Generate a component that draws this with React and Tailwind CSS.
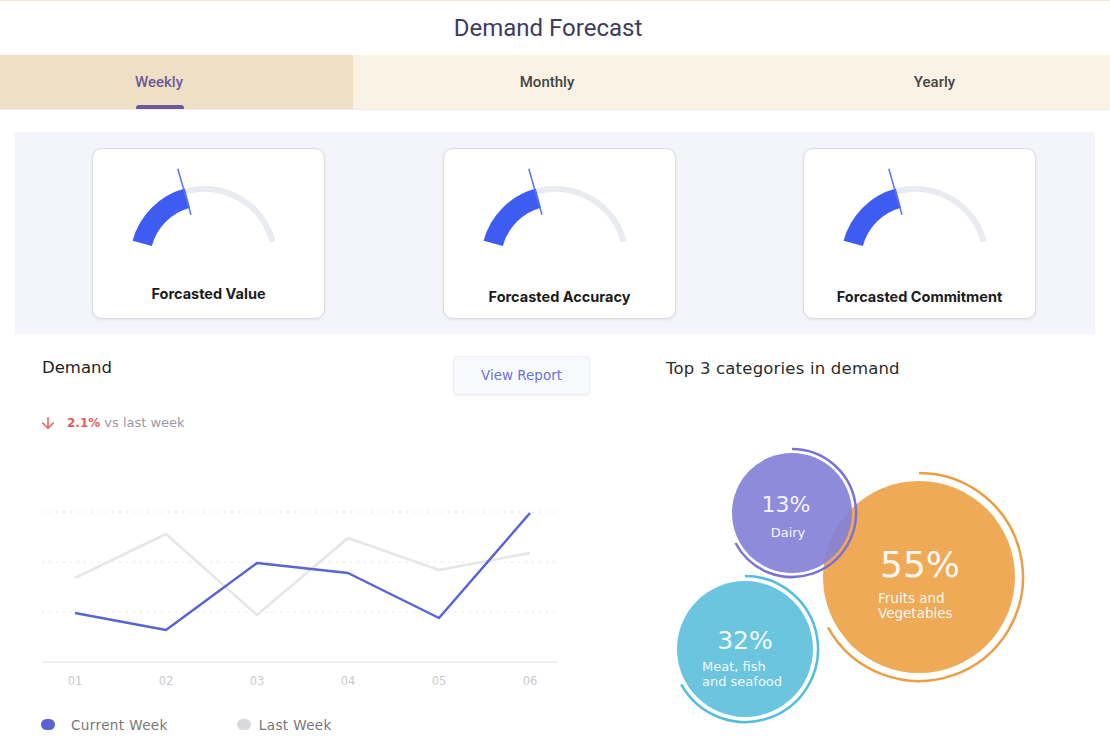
import React from 'react';
import { ArrowDown } from 'lucide-react';

const poppins = { fontFamily: '"DejaVu Sans", "Noto Sans", sans-serif' };

const cards = [
  { title: 'Forcasted Value', ml: 'ml-[77px]', labelTop: 'mt-[0px]' },
  { title: 'Forcasted Accuracy', ml: 'ml-[118px]', labelTop: 'mt-[3px]' },
  { title: 'Forcasted Commitment', ml: 'ml-[127px]', labelTop: 'mt-[3px]' },
];

const Gauge = () => (
  <svg width="233" height="134" viewBox="0 0 233 134">
    <path d="M 93.6 42.4 A 71 71 0 0 1 180.6 92.6" fill="none" stroke="#e8ebef" strokeWidth="6" />
    <path d="M 50.2 94.4 A 64 64 0 0 1 95.4 49.2" fill="none" stroke="#3f5cf2" strokeWidth="20" />
    <line x1="99" y1="65.8" x2="85.8" y2="19.7" stroke="#5b73f5" strokeWidth="1.5" />
  </svg>
);

const current = [612, 629, 562, 572, 617, 512];
const last = [577, 533, 614, 537, 569, 552];
const xs = [75, 166, 257, 348, 439, 530];

const LineChart = () => {
  // svg starts at page x 40, y 490
  const pts = (arr) => arr.map((y, i) => `${xs[i] - 40},${y - 490}`).join(' ');
  return (
    <svg width="522" height="205" viewBox="0 0 522 205" className="block">
      {[21, 71, 121].map((y) => (
        <line key={y} x1="2" x2="518" y1={y} y2={y} stroke="#e4e4e8" strokeWidth="1" strokeDasharray="2 5" />
      ))}
      <line x1="2" x2="518" y1="171" y2="171" stroke="#ececf0" strokeWidth="1.5" />
      <polyline points={pts(last)} fill="none" stroke="#e6e6ea" strokeWidth="2.5" strokeLinejoin="round" />
      <polyline points={pts(current)} fill="none" stroke="#5b63d3" strokeWidth="2.5" strokeLinejoin="round" />
      {xs.map((x, i) => (
        <text key={x} x={x - 40} y="194" textAnchor="middle" fill="#c9c9cf" fontSize="11.5" style={poppins}>
          {'0' + (i + 1)}
        </text>
      ))}
    </svg>
  );
};

// arc from 90deg clockwise to a given end angle (math deg, e.g. 208 => lower left)
const ringPath = (cx, cy, r, endDeg) => {
  const a = (endDeg * Math.PI) / 180;
  const ex = cx + r * Math.cos(a);
  const ey = cy - r * Math.sin(a);
  return `M ${cx} ${cy - r} A ${r} ${r} 0 1 1 ${ex.toFixed(1)} ${ey.toFixed(1)}`;
};

const Bubbles = () => (
  <svg width="380" height="290" viewBox="0 0 380 290" className="block">
    <circle cx="259" cy="136" r="96" fill="#eeaa57" />
    <path d={ringPath(259, 136, 104, 209)} fill="none" stroke="#eb9f44" strokeWidth="2.5" />
    <circle cx="85" cy="208" r="68" fill="#6cc5df" />
    <path d={ringPath(85, 208, 73, 209)} fill="none" stroke="#52bde0" strokeWidth="2.5" />
    <circle cx="132" cy="72" r="60" fill="#8581d8" fillOpacity="0.92" />
    <path d={ringPath(132, 72, 64, 208)} fill="none" stroke="#7a72d3" strokeWidth="2.5" />

    <g fill="#ffffff" fillOpacity="0.93" style={poppins}>
      <text x="126" y="71" textAnchor="middle" fontSize="22">13%</text>
      <text x="128" y="96" textAnchor="middle" fontSize="13">Dairy</text>
      <text x="260" y="136" textAnchor="middle" fontSize="36">55%</text>
      <text x="218" y="162" fontSize="13.5">Fruits and</text>
      <text x="218" y="177" fontSize="13.5">Vegetables</text>
      <text x="85" y="208" textAnchor="middle" fontSize="25">32%</text>
      <text x="42" y="230" fontSize="13">Meat, fish</text>
      <text x="42" y="245" fontSize="13">and seafood</text>
    </g>
  </svg>
);

const App = () => {
  return (
    <div className="w-[1110px] h-[752px] overflow-hidden bg-white border-t border-[#f1e6d2]" style={{ fontFamily: 'Inter, sans-serif' }}>
      {/* header */}
      <div className="h-[54px] flex items-center justify-center pr-[14px]">
        <h1 className="text-[24px] text-[#3d3b62]" style={{ fontFamily: 'Roboto, sans-serif' }}>Demand Forecast</h1>
      </div>

      {/* tabs */}
      <div className="h-[55px] flex border-b border-[#ececee] bg-[#faf2e5] text-[15px] font-medium" style={{ fontFamily: 'Roboto, sans-serif' }}>
        <div className="w-[353px] bg-[#efe0c5] relative flex items-center pl-[135px]">
          <span className="text-[#6b5a9b]">Weekly</span>
          <div className="absolute left-[136px] bottom-0 w-[48px] h-[4px] rounded-t-[3px] bg-[#6b5a9b]" />
        </div>
        <div className="w-[388px] flex items-center justify-center text-[#454545]">Monthly</div>
        <div className="flex-1 flex items-center justify-center pl-[18px] text-[#454545]">Yearly</div>
      </div>

      {/* gauges */}
      <div className="mx-[15px] mt-[22px] h-[202px] bg-[#f4f5fb] flex pt-[16px]">
        {cards.map((c) => (
          <div key={c.title} className={`${c.ml} w-[233px] h-[171px] bg-white rounded-[10px] border border-[#dcdde3] shadow-[0_1px_3px_rgba(0,0,0,0.08)] flex flex-col items-center`}>
            <Gauge />
            <div className={`${c.labelTop} text-[14.5px] font-bold text-[#1c1c1c]`}>{c.title}</div>
          </div>
        ))}
      </div>

      {/* bottom */}
      <div className="flex">
        <div className="w-[560px] ml-[40px] flex flex-col">
          <div className="flex items-start justify-between mt-[22px] w-[550px]">
            <div className="mt-[0px] ml-[2px] text-[16.5px] text-[#1e1e1e]" style={poppins}>Demand</div>
            <button className="w-[137px] h-[39px] rounded-[4px] border border-[#eceef4] bg-[#f8f9fd] text-[13.5px] text-[#6b72d8] shadow-[0_1px_2px_rgba(0,0,0,0.04)]" style={poppins}>
              View Report
            </button>
          </div>
          <div className="flex items-center mt-[18px] text-[13px]" style={poppins}>
            <ArrowDown size={18} strokeWidth={2} className="text-[#e35b5b] -ml-[1px]" />
            <span className="ml-[10px] text-[12px] font-bold text-[#e35b5b]">2.1%</span>
            <span className="ml-[4px] text-[#9a9aa2]">vs last week</span>
          </div>
          <div className="mt-[58px]">
            <LineChart />
          </div>
          <div className="flex items-center mt-[19px] text-[13.5px] text-[#777779] tracking-[0.4px]" style={poppins}>
            <span className="ml-[1px] w-[14px] h-[11px] rounded-full bg-[#5b63d3]" />
            <span className="ml-[16px]">Current Week</span>
            <span className="ml-[69px] w-[14px] h-[11px] rounded-full bg-[#d9d9dd]" />
            <span className="ml-[8px]">Last Week</span>
          </div>
        </div>
        <div className="ml-[66px] flex flex-col">
          <div className="mt-[23px] text-[16.5px] tracking-[0.2px] text-[#2b2b2b]" style={poppins}>Top 3 categories in demand</div>
          <div className="mt-[59px] -ml-[6px]">
            <Bubbles />
          </div>
        </div>
      </div>
    </div>
  );
};

export default App;
